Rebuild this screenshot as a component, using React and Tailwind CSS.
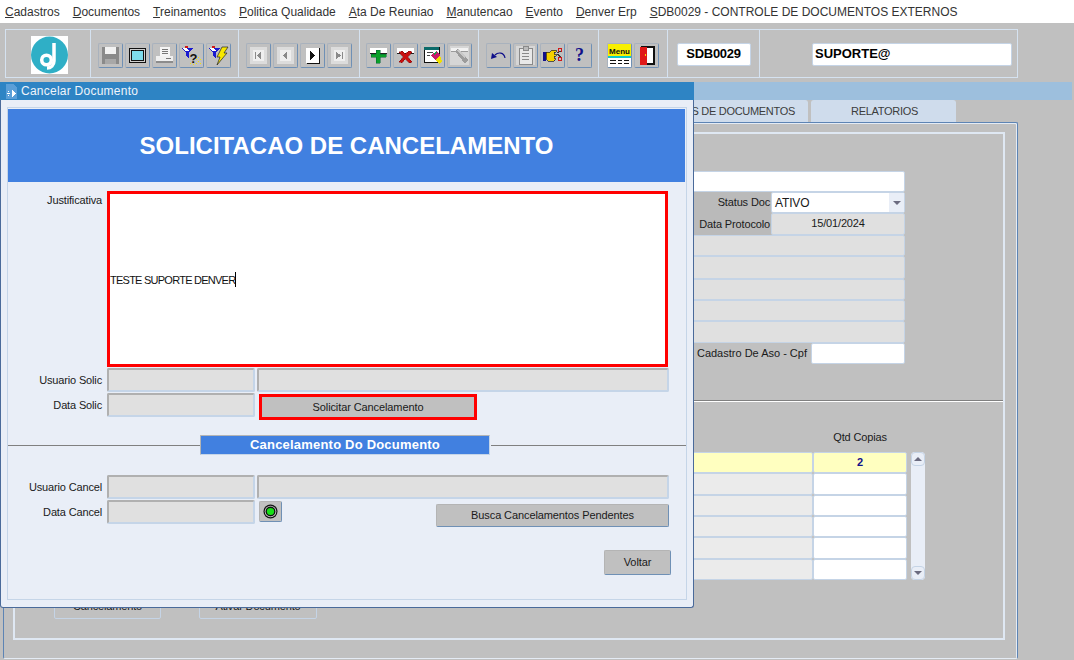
import React from 'react';

const MENU = [
  ['C', 'adastros'],
  ['D', 'ocumentos'],
  ['T', 'reinamentos'],
  ['P', 'olitica Qualidade'],
  ['A', 'ta De Reuniao'],
  ['M', 'anutencao'],
  ['E', 'vento'],
  ['D', 'enver Erp'],
  ['S', 'DB0029 - CONTROLE DE DOCUMENTOS EXTERNOS'],
];

const Svg = ({ children }) => (
  <svg width="21" height="21" viewBox="0 0 21 21" shapeRendering="crispEdges">
    {children}
  </svg>
);

const Funnel = () => (
  <>
    <path d="M1 3h11l-4 5v5l-3-2V8z" fill="#1a1ad0" />
    <path d="M1 3h5l2 3H4z" fill="#fff" />
    <path d="M4 1h3v2H4z" fill="#d01818" />
  </>
);

const icons = {
  save: (
    <Svg>
      <path d="M2 2h16l1 1v16H2z" fill="#8a8a8a" />
      <path d="M5 2h11v7H5z" fill="#f2f2f2" />
      <path d="M5 14h11v5H5z" fill="#a8a8a8" />
    </Svg>
  ),
  frame: (
    <Svg>
      <path d="M2 3h17v15H2z" fill="#111" />
      <path d="M3 4h15v13H3z" fill="#cfcfcf" />
      <path d="M4 5h13v11H4z" fill="#111" />
      <path d="M5 6h11v9H5z" fill="#7fdcec" />
    </Svg>
  ),
  print: (
    <Svg>
      <path d="M6 2h10v9H6z" fill="#f4f4f4" />
      <path d="M8 4h6v1H8zM8 6h6v1H8zM8 8h6v1H8z" fill="#777" />
      <path d="M2 11h17v6H2z" fill="#f0f0f0" />
      <path d="M2 16h17v2H2z" fill="#8c8c8c" />
      <path d="M12 13h5v1h-5z" fill="#777" />
    </Svg>
  ),
  query: (
    <Svg>
      <Funnel />
      <text x="8.500" y="18" fontSize="13" fontWeight="700" fontFamily="Liberation Sans" fill="#111">?</text>
      <path d="M15 14h1v1h-1zM17 16h1v1h-1zM15 18h1v1h-1zM17 12h1v1h-1zM19 14h1v1h-1zM19 18h1v1h-1zM9 18h1v1H9zM12 19h1v1h-1z" fill="#f5e400" />
    </Svg>
  ),
  execute: (
    <Svg>
      <Funnel />
      <path d="M14 2h6l-4 6h3L9 20l3-8H9z" fill="#f8e800" stroke="#222" strokeWidth="0.7" shapeRendering="auto" />
    </Svg>
  ),
  first: (
    <Svg>
      <path d="M2 2h17v17H2z" fill="#dcdcdc" />
      <path d="M5 5h11v11H5z" fill="#efefef" />
      <path d="M7 7h1v7H7zM13 7v7l-4-3.500z" fill="#8a8a8a" />
    </Svg>
  ),
  prev: (
    <Svg>
      <path d="M2 2h17v17H2z" fill="#dcdcdc" />
      <path d="M5 5h11v11H5z" fill="#efefef" />
      <path d="M12 6v9l-4-4.500z" fill="#8a8a8a" />
    </Svg>
  ),
  next: (
    <Svg>
      <path d="M4 3h13v15H4z" fill="#fff" />
      <path d="M17 3h1v16H5v-1h12z" fill="#111" />
      <path d="M8 6v9l5-4.500z" fill="#111" />
    </Svg>
  ),
  last: (
    <Svg>
      <path d="M2 2h17v17H2z" fill="#dcdcdc" />
      <path d="M5 5h11v11H5z" fill="#efefef" />
      <path d="M13 7h1v7h-1zM7 7v7l5-3.500z" fill="#8a8a8a" />
    </Svg>
  ),
  add: (
    <Svg>
      <path d="M2 3h17v5H2z" fill="#fff" />
      <path d="M2 8h17v1H2z" fill="#222" />
      <path d="M8 5h4v4h6v3h-6v6H8v-6H3V9h5z" fill="#0aa02a" stroke="#063" strokeWidth="0.5" />
    </Svg>
  ),
  remove: (
    <Svg>
      <path d="M2 3h17v5H2z" fill="#fff" />
      <path d="M2 8h17v1H2z" fill="#222" />
      <path d="M4 7l3-1 3 3 4-3 3 1-4 5 4 5-3 1-4-4-3 4-3-1 4-5z" fill="#c81010" stroke="#600" strokeWidth="0.4" />
    </Svg>
  ),
  edit: (
    <Svg>
      <path d="M2 2h15v15H2z" fill="#fff" stroke="#111" />
      <path d="M2 2h15v3H2z" fill="#0a6a6a" />
      <path d="M5 7h6v1H5zM5 10h3v1H5z" fill="#444" />
      <path d="M9 10l6-4 3 4-5 5z" fill="#c81a6a" />
      <path d="M11 9l3-2 1 1-3 2z" fill="#18a048" />
      <path d="M13 15l5-5 2 7-3 2z" fill="#f0e000" />
    </Svg>
  ),
  tool: (
    <>
      <span className="absolute inset-[2px] bg-[#d6d6d6]" />
      <span className="relative">
        <Svg>
          <path d="M2 3h17v3H2z" fill="#f2f2f2" />
          <path d="M2 6h17v1H2z" fill="#9a9a9a" />
          <path d="M6 6l3-2 10 11-3 4z" fill="#9c9c9c" />
          <path d="M8 5l2-1 7 8-2 1z" fill="#c8c8c8" />
        </Svg>
      </span>
    </>
  ),
  undo: (
    <svg width="21" height="21" viewBox="0 0 21 21">
      <path d="M7 10c3-3 9-3 10 3" fill="none" stroke="#10108a" strokeWidth="1.2" />
      <path d="M3 14l1-6 5 4z" fill="#10108a" />
    </svg>
  ),
  clip: (
    <>
      <span className="absolute inset-[2px] bg-[#d6d6d6]" />
      <span className="relative">
        <Svg>
          <path d="M4 3h13v16H4z" fill="#e8e8e8" stroke="#8a8a8a" />
          <path d="M8 1h5v4H8z" fill="#bbb" stroke="#8a8a8a" />
          <path d="M7 8h7v1H7zM7 11h7v1H7zM7 14h7v1H7z" fill="#8a8a8a" />
        </Svg>
      </span>
    </>
  ),
  hand: (
    <Svg>
      <path d="M1 7h3v9H1z" fill="#10108a" />
      <path d="M4 7h4l2-2h4v2h-2v2h2v2h-2v2h1v2h-1v1H6l-2-2z" fill="#f4d000" stroke="#222" strokeWidth="0.7" />
      <path d="M16 3h3v3h-3zM16 12h3v3h-3z" fill="none" stroke="#d01818" />
      <path d="M15 8l4-2M15 9l4 3" stroke="#333" fill="none" />
    </Svg>
  ),
  help: (
    <svg width="21" height="21" viewBox="0 0 21 21">
      <text x="10.500" y="16" textAnchor="middle" fontSize="18" fontWeight="700" fontFamily="Liberation Serif" fill="#10108a">?</text>
    </svg>
  ),
  menu: (
    <svg width="23" height="23" viewBox="0 0 23 23" shapeRendering="crispEdges">
      <path d="M0 0h23v12H0z" fill="#f8f000" />
      <text x="11.500" y="9.500" textAnchor="middle" fontSize="8" fontWeight="700" fontFamily="Liberation Sans" fill="#111">Menu</text>
      <path d="M0 12h23v2H0z" fill="#12c8c8" />
      <path d="M0 14h23v9H0z" fill="#fff" />
      <path d="M2 16h6v1H2zM10 16h4v1h-4zM16 16h5v1h-5zM2 19h6v1H2zM10 19h4v1h-4zM16 19h5v1h-5z" fill="#111" />
    </svg>
  ),
  door: (
    <Svg>
      <path d="M5 2h14v17H5z" fill="#fff" />
      <path d="M5 1h14v2H5zM17 1h2v19h-2zM5 18h14v2H5z" fill="#111" />
      <path d="M4 2h7v18H4z" fill="#e01818" />
      <path d="M9 9h1v2H9z" fill="#f8e000" />
    </Svg>
  ),
};

const ToolButton = ({ icon }) => (
  <div className="relative flex h-[25px] w-[25px] items-center justify-center rounded-[2px] border border-t-[#a9b2bd] border-l-[#a9b2bd] border-b-[#6f90b5] border-r-[#6f90b5]">
    {icons[icon]}
  </div>
);

const ToolGroup = ({ names, className }) => (
  <div className={`flex items-center justify-center gap-[2px] border-r border-[#d5e2f0] pt-[3px] ${className}`}>
    {names.map((name) => (
      <ToolButton key={name} icon={name} />
    ))}
  </div>
);

const Logo = () => (
  <svg width="37" height="38" viewBox="0 0 37 38">
    <rect width="37" height="38" fill="#fff" />
    <circle cx="18.500" cy="19" r="18.500" fill="#2fafc6" />
    <circle cx="15.500" cy="24" r="4.800" fill="none" stroke="#fff" strokeWidth="3.500" />
    <path d="M23 7v18c0 4-3 7-7 7" fill="none" stroke="#fff" strokeWidth="3.500" />
  </svg>
);

const Toolbar = () => (
  <div className="flex h-[59px] bg-[#c0c0c0] pl-[5px] pt-[6px]">
    <div className="flex h-[49px] w-[1013px] border border-[#d5e2f0]">
      <div className="flex w-[85px] items-center justify-center border-r border-[#d5e2f0] pl-[2px] pt-[3px]">
        <Logo />
      </div>
      <ToolGroup className="w-[148px]" names={['save', 'frame', 'print', 'query', 'execute']} />
      <ToolGroup className="w-[121px]" names={['first', 'prev', 'next', 'last']} />
      <ToolGroup className="w-[119px]" names={['add', 'remove', 'edit', 'tool']} />
      <ToolGroup className="w-[120px]" names={['undo', 'clip', 'hand', 'help']} />
      <ToolGroup className="w-[69px]" names={['menu', 'door']} />
      <div className="flex w-[92px] items-center justify-center border-r border-[#d5e2f0] pt-[1px]">
        <div className="flex h-[23px] w-[74px] items-center justify-center rounded-[2px] border border-[#c5d4e6] bg-white text-[13px] font-bold tracking-[-0.3px] text-black">
          SDB0029
        </div>
      </div>
      <div className="flex flex-1 items-center justify-end pr-[5px] pt-[1px]">
        <div className="flex h-[23px] w-[200px] items-center rounded-[2px] border border-[#c5d4e6] bg-white pl-[2px] text-[13px] font-bold text-black">
          SUPORTE@
        </div>
      </div>
    </div>
  </div>
);

const FormRow = ({ className, children }) => (
  <div className={`flex shrink-0 items-center justify-end ${className}`}>{children}</div>
);

const RightForm = () => (
  <div className="flex flex-col items-end pr-[98px] pt-[37px] text-[11px] tracking-[-0.15px] text-[#1a1a1a]">
    <FormRow className="h-[21px]">
      <div className="h-full w-[320px] rounded-[2px] border border-[#c5d4e6] bg-white" />
    </FormRow>
    <FormRow className="h-[21px]">
      <span className="flex h-full w-[90px] items-center justify-end bg-[#bababa] pr-px">Status Doc</span>
      <div className="flex h-full w-[134px] items-center justify-between rounded-[2px] border border-[#c5d4e6] bg-white pl-[3px] text-[12px]">
        ATIVO
        <span className="flex h-[19px] w-[15px] items-center justify-center bg-[#e9eef7]">
          <span className="h-0 w-0 border-x-[4px] border-t-[4px] border-x-transparent border-t-[#6b6b80]" />
        </span>
      </div>
    </FormRow>
    <FormRow className="h-[22px]">
      <span className="flex h-full w-[90px] items-center justify-end bg-[#bababa] pr-px">Data Protocolo</span>
      <div className="flex h-full w-[134px] items-center justify-center rounded-[2px] border border-[#c5d4e6] bg-[#e0e0e0] pb-[2px]">
        15/01/2024
      </div>
    </FormRow>
    {['h-[21px]', 'h-[23px]', 'h-[21px]', 'h-[21px]', 'h-[22px]'].map((height, i) => (
      <div key={i} className={`${height} w-[320px] rounded-[2px] border border-[#c5d4e6] bg-[#e0e0e0]`} />
    ))}
    <FormRow className="h-[21px]">
      <span className="mr-[4px] tracking-[0px]">Cadastro De Aso - Cpf</span>
      <div className="h-full w-[94px] rounded-[2px] border border-[#c5d4e6] bg-white" />
    </FormRow>
  </div>
);

const ScrollCap = ({ dir }) => (
  <div className="flex h-[14px] w-full items-center justify-center rounded-[4px] border border-[#c5d4e6] bg-[#e9eef7]">
    {dir === 'up' ? (
      <span className="h-0 w-0 border-x-[4px] border-b-[4px] border-x-transparent border-b-[#6b6b80]" />
    ) : (
      <span className="h-0 w-0 border-x-[4px] border-t-[4px] border-x-transparent border-t-[#6b6b80]" />
    )}
  </div>
);

const CopiesTable = () => (
  <div className="mr-[78px]">
    <div className="ml-[300px] mb-[8px] mr-[18px] text-center text-[11px] leading-[13px] tracking-[-0.15px] text-[#1a1a1a]">Qtd Copias</div>
    <div className="flex">
      <div className="flex h-[128px] w-[394px] flex-col">
        <div className="flex flex-1">
          <div className="w-[300px] rounded-[2px] border border-[#c5d4e6] bg-[#ffffc0]" />
          <div className="flex w-[94px] items-center justify-center rounded-[2px] border border-[#c5d4e6] bg-[#ffffc0] text-[11px] font-bold text-[#10108a]">
            2
          </div>
        </div>
        {[1, 2, 3, 4, 5].map((n) => (
          <div key={n} className="flex flex-1">
            <div className="w-[300px] rounded-[2px] border border-[#c5d4e6] bg-[#ebebeb]" />
            <div className="w-[94px] rounded-[2px] border border-[#c5d4e6] bg-white" />
          </div>
        ))}
      </div>
      <div className="ml-[4px] flex h-[128px] w-[14px] flex-col justify-between rounded-[4px] bg-[#e9eef7]">
        <ScrollCap dir="up" />
        <ScrollCap dir="down" />
      </div>
    </div>
  </div>
);

const Background = () => (
  <>
    <div className="mr-[2px] h-[18px] bg-[#9dbfdd]" />
    <div className="flex h-[22px] pl-[600px] text-[11px] tracking-[-0.3px] text-[#3c3c3c]">
      <div className="flex w-[208px] items-center justify-end rounded-t-[3px] bg-[#cfdcec] pr-[13px]">
        ARQUIVOS DE DOCUMENTOS
      </div>
      <div className="ml-[3px] flex w-[145px] items-center justify-center rounded-t-[3px] bg-[#cfdcec] pl-[2px]">
        RELATORIOS
      </div>
    </div>
    <div className="ml-[3px] h-[537px] w-[1015px] rounded-[2px] border border-t-[#5d84b4] border-r-[#5d84b4] border-b-[#e4ebf4] border-l-[#5d84b4] pl-[9px] pr-[12px] pt-[9px] shadow-[inset_-1px_1px_0_#e4ebf4]">
      <div className="flex h-[508px] flex-col border-2 border-[#dfe8f3]">
        <RightForm />
        <div className="mt-[36px] h-[2px] shrink-0 border-t border-[#808080] bg-white" />
        <div className="mt-[29px] flex shrink-0 justify-end">
          <CopiesTable />
        </div>
        <div className="mt-[14px] flex gap-[38px] pl-[39px] text-[11px] tracking-[-0.15px] text-[#1a1a1a]">
          <div className="flex h-[25px] w-[107px] items-center justify-center rounded-[2px] border border-[#c5d4e6]">
            Cancelamento
          </div>
          <div className="flex h-[25px] w-[118px] items-center justify-center rounded-[2px] border border-[#c5d4e6]">
            Ativar Documento
          </div>
        </div>
      </div>
    </div>
  </>
);

const Field = ({ className }) => (
  <div className={`h-[24px] rounded-[2px] border-2 border-b-[#c5d5e8] border-r-[#c5d5e8] border-t-[#b0b0b0] border-l-[#b0b0b0] bg-[#e0e0e0] ${className}`} />
);

const Label = ({ children, className = '' }) => (
  <span className={`w-[95px] shrink-0 pr-[1px] text-right text-[11px] tracking-[-0.15px] text-[#1a1a1a] ${className}`}>{children}</span>
);

const GrayButton = ({ children, className }) => (
  <div className={`flex items-center justify-center rounded-[2px] border border-t-[#b4b4b4] border-l-[#b4b4b4] border-b-[#6f90b5] border-r-[#6f90b5] bg-[#c0c0c0] text-[11px] tracking-[-0.1px] text-[#1a1a1a] ${className}`}>
    {children}
  </div>
);

const CancelWindow = () => (
  <div className="absolute left-0 top-[82px] h-[526px] w-[694px] rounded-b-[3px] border-x border-b border-[#4a6a9a] bg-[#e9eef7]">
    <div className="-mx-px flex h-[18px] items-center bg-[#2e84c4] pl-[5px] text-[12px] tracking-[0.25px] text-[#eef4fb]">
      <svg width="13" height="15" viewBox="0 0 13 15" shapeRendering="crispEdges" className="mr-[3px]">
        <path d="M1 0h7l4 4v11H1z" fill="#5b9fd8" />
        <path d="M3 7h1v1H3V7zM2 9h3v1H2zM3 11h1v1H3zM7 6h1v7H7zM8 7l3 2.500-3 2.500z" fill="#fff" />
      </svg>
      Cancelar Documento
    </div>
    <div className="ml-[6px] mt-[7px] flex h-[493px] w-[680px] flex-col border border-[#c5d5e8] pt-[1px]">
      <div className="mr-px flex h-[73px] shrink-0 items-center justify-center bg-[#4180e0] text-[24px] font-bold text-white">
        SOLICITACAO DE CANCELAMENTO
      </div>
      <div className="mt-[9px] flex items-start">
        <Label className="mt-[1px]">Justificativa</Label>
        <div className="ml-[4px] flex h-[176px] w-[561px] items-center border-[3px] border-[#ff0000] bg-white pt-[1px] text-[11px] leading-[14px] tracking-[-0.75px] text-[#111]">
          TESTE SUPORTE DENVER
          <span className="h-[15px] w-px bg-black" />
        </div>
      </div>
      <div className="mt-px flex items-center">
        <Label>Usuario Solic</Label>
        <Field className="ml-[4px] w-[148px]" />
        <Field className="ml-[2px] w-[412px]" />
      </div>
      <div className="mt-px flex items-start">
        <Label className="mt-[4px]">Data Solic</Label>
        <Field className="ml-[4px] w-[148px]" />
        <GrayButton className="ml-[4px] mt-px h-[26px] w-[218px] !rounded-none !border-[3px] !border-[#ff0000]">
          Solicitar Cancelamento
        </GrayButton>
      </div>
      <div className="mt-[15px] flex h-[20px] items-center">
        <div className="h-px w-[192px] bg-[#808080]" />
        <div className="flex h-full w-[290px] items-center justify-center rounded-[1px] border border-t-[#b4b4b4] border-l-[#b4b4b4] border-b-[#c5d5e8] border-r-[#c5d5e8] bg-[#4180e0] text-[13px] font-bold tracking-[0.2px] text-white">
          Cancelamento Do Documento
        </div>
        <div className="ml-px h-px flex-1 bg-[#808080]" />
      </div>
      <div className="mt-[20px] flex items-center">
        <Label>Usuario Cancel</Label>
        <Field className="ml-[4px] w-[148px]" />
        <Field className="ml-[2px] w-[412px]" />
      </div>
      <div className="mt-px flex items-start">
        <Label className="mt-[4px]">Data Cancel</Label>
        <Field className="ml-[4px] w-[148px]" />
        <div className="ml-[4px] mt-px flex h-[21px] w-[23px] items-center justify-center rounded-[2px] border border-t-[#b4b4b4] border-l-[#b4b4b4] border-b-[#6f90b5] border-r-[#6f90b5] bg-[#c0c0c0]">
          <svg width="15" height="15" viewBox="0 0 15 15">
            <circle cx="7.500" cy="7.500" r="7" fill="#111" />
            <circle cx="7.500" cy="7.500" r="5.800" fill="#ddd" />
            <circle cx="7.500" cy="7.500" r="5" fill="#111" />
            <circle cx="7.500" cy="7.500" r="3.600" fill="#16e016" />
          </svg>
        </div>
        <GrayButton className="ml-[154px] mt-[4px] h-[23px] w-[233px]">Busca Cancelamentos Pendentes</GrayButton>
      </div>
      <div className="mt-[23px] flex justify-end pr-[15px]">
        <GrayButton className="h-[25px] w-[67px]">Voltar</GrayButton>
      </div>
    </div>
  </div>
);

const App = () => {
  return (
    <div className="relative h-[660px] w-[1074px] overflow-hidden bg-[#c0c0c0] font-['Liberation_Sans',Arial,sans-serif]">
      <div className="flex h-[23px] items-center gap-[13px] bg-white pl-[5px] text-[12px] text-[#333]">
        {MENU.map(([first, rest]) => (
          <span key={first + rest}>
            <u>{first}</u>
            {rest}
          </span>
        ))}
      </div>
      <Toolbar />
      <Background />
      <CancelWindow />
    </div>
  );
};

export default App;
